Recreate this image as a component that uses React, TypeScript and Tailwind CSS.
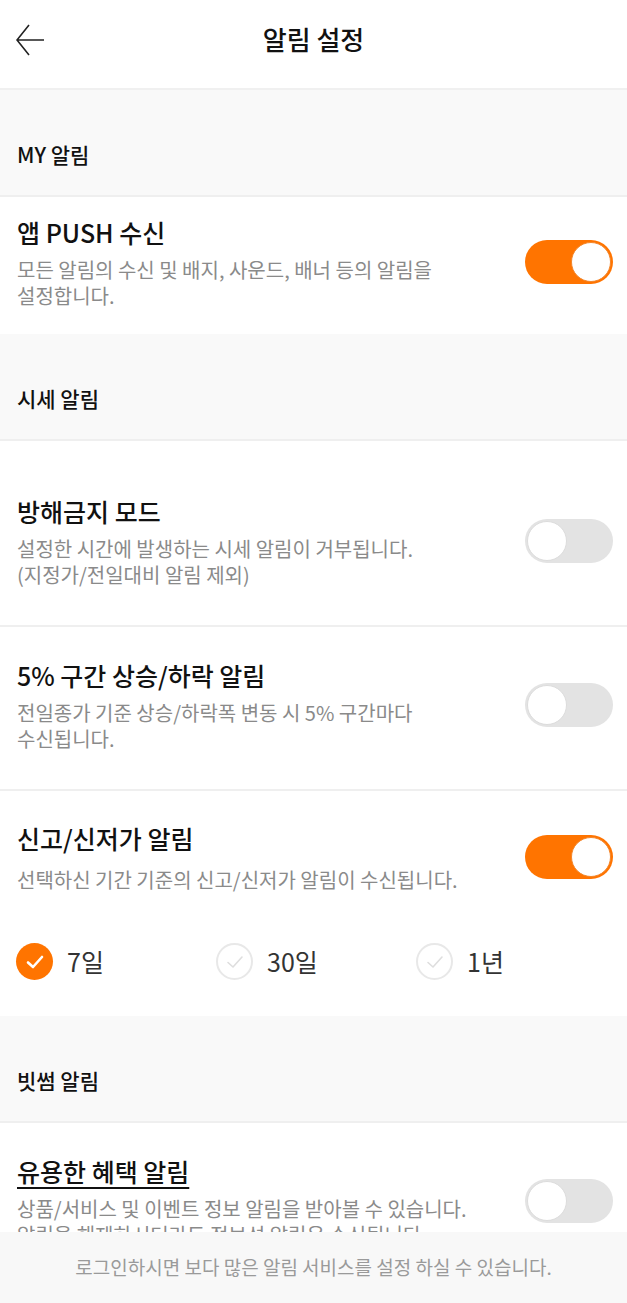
import React from 'react';

const font = { fontFamily: '"Noto Sans CJK KR", "Noto Sans", sans-serif' };

function Toggle({ on }: { on: boolean }) {
  return (
    <div
      className={`w-[88px] h-[44px] rounded-full p-[2px] flex shrink-0 ${
        on ? 'bg-[#ff7400] justify-end' : 'bg-[#e3e3e3] justify-start'
      }`}
    >
      <div
        className={`w-[40px] h-[40px] rounded-full bg-white border ${
          on ? 'border-[#f3862a]' : 'border-[#dcdcdc]'
        }`}
      />
    </div>
  );
}

function SectionHeader({ label }: { label: string }) {
  return (
    <div className="bg-[#f9f9f9] border-b-2 border-[#efefef] px-[17px] pt-[50px] pb-[27px]">
      <div className="text-[21px] leading-[28px] font-medium text-[#111]">{label}</div>
    </div>
  );
}

function Row({
  title,
  lines,
  on,
  pt,
  pb,
  underline,
  border = true,
}: {
  title: string;
  lines: [string, string];
  on: boolean;
  pt: string;
  pb: string;
  underline?: boolean;
  border?: boolean;
}) {
  return (
    <div className={`bg-white flex items-center pl-[17px] pr-[14px] ${pt} ${pb} ${border ? 'border-b-2 border-[#efefef]' : ''}`}>
      <div className="flex-1">
        <div
          className={`text-[25px] leading-[34px] font-medium text-[#111] ${
            underline ? 'underline underline-offset-[5px] decoration-[2px]' : ''
          }`}
        >
          {title}
        </div>
        <p className="mt-[8px] text-[20px] leading-[26px] text-[#8a8a8a] whitespace-nowrap">
          {lines[0]}
          <br />
          {lines[1]}
        </p>
      </div>
      <Toggle on={on} />
    </div>
  );
}

function Check({ checked, label }: { checked: boolean; label: string }) {
  return (
    <div className="w-[200px] flex items-center gap-[14px]">
      <div
        className={`w-[37px] h-[37px] rounded-full flex items-center justify-center ${
          checked ? 'bg-[#ff7400]' : 'bg-white border-2 border-[#e8e8e8]'
        }`}
      >
        <svg width="18" height="14" viewBox="0 0 18 14" fill="none">
          <path
            d="M2 7.5 L7 12 L16 2"
            stroke={checked ? '#ffffff' : '#dedede'}
            strokeWidth={checked ? 2.6 : 1.6}
            strokeLinecap="round"
            strokeLinejoin="round"
          />
        </svg>
      </div>
      <span className="text-[25px] text-[#333]">{label}</span>
    </div>
  );
}

export default function App() {
  return (
    <div style={font} className="relative w-[627px] h-[1303px] overflow-hidden bg-white">
      {/* Header */}
      <div className="h-[90px] bg-white border-b-2 border-[#f0f0f0] flex items-center relative">
        <div className="absolute left-[16px] top-[24px]">
          <svg width="30" height="32" viewBox="0 0 30 32" fill="none">
            <path d="M13 1 L1 16 L13 31 M1 16 H28" stroke="#222" strokeWidth="1.6" strokeLinejoin="miter" />
          </svg>
        </div>
        <div className="w-full text-center text-[26px] font-medium text-[#111] leading-[34px] -mt-[10px]">알림 설정</div>
      </div>

      <SectionHeader label="MY 알림" />
      <Row
        title="앱 PUSH 수신"
        lines={['모든 알림의 수신 및 배지, 사운드, 배너 등의 알림을', '설정합니다.']}
        on
        pt="pt-[18px]"
        pb="pb-[25px]"
        border={false}
      />

      <SectionHeader label="시세 알림" />
      <Row
        title="방해금지 모드"
        lines={['설정한 시간에 발생하는 시세 알림이 거부됩니다.', '(지정가/전일대비 알림 제외)']}
        on={false}
        pt="pt-[53px]"
        pb="pb-[37px]"
      />
      <Row
        title="5% 구간 상승/하락 알림"
        lines={['전일종가 기준 상승/하락폭 변동 시 5% 구간마다', '수신됩니다.']}
        on={false}
        pt="pt-[31px]"
        pb="pb-[37px]"
      />

      {/* 신고/신저가 */}
      <div className="bg-white">
        <div className="flex items-center pl-[17px] pr-[14px] pt-[30px]">
          <div className="flex-1">
            <div className="text-[25px] leading-[34px] font-medium text-[#111]">신고/신저가 알림</div>
            <div className="mt-[12px] text-[20px] leading-[26px] text-[#8a8a8a] whitespace-nowrap">
              선택하신 기간 기준의 신고/신저가 알림이 수신됩니다.
            </div>
          </div>
          <Toggle on />
        </div>
        <div className="flex pl-[16px] pt-[50px] pb-[35px]">
          <Check checked label="7일" />
          <Check checked={false} label="30일" />
          <Check checked={false} label="1년" />
        </div>
      </div>

      <SectionHeader label="빗썸 알림" />
      <Row
        title="유용한 혜택 알림"
        lines={['상품/서비스 및 이벤트 정보 알림을 받아볼 수 있습니다.', '알림을 해제하시더라도 정보성 알림은 수신됩니다.']}
        on={false}
        pt="pt-[31px]"
        pb="pb-[30px]"
        underline
        border={false}
      />

      {/* Footer */}
      <div className="absolute left-0 right-0 bottom-0 h-[71px] bg-[#f8f8f8] flex items-center justify-center">
        <span className="text-[19px] text-[#9a9a9a]">로그인하시면 보다 많은 알림 서비스를 설정 하실 수 있습니다.</span>
      </div>
    </div>
  );
}
